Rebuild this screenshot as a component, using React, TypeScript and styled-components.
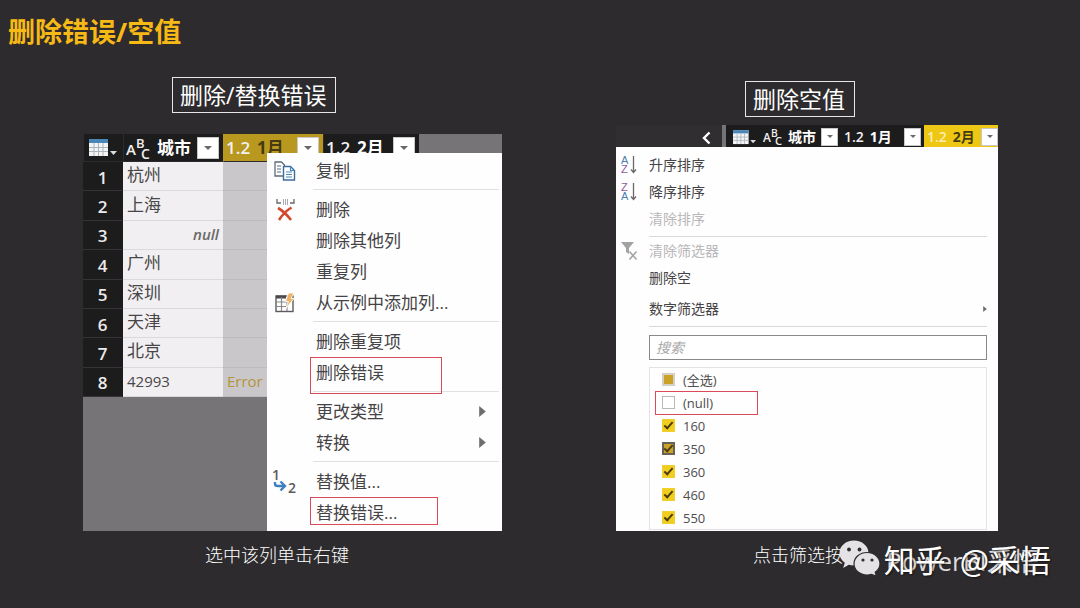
import React from "react";
import styled, { createGlobalStyle, css } from "styled-components";

const sans = `"Open Sans", "Noto Sans CJK SC", sans-serif`;

const GlobalStyle = createGlobalStyle`
  *, *::before, *::after { box-sizing: border-box; }
  body { margin: 0; background: #2d2b2d; font-family: ${sans}; }
  button, input { font-family: inherit; }
`;

const Page = styled.div`
  position: relative;
  min-height: 100vh;
  background: #2d2b2d;
  color: #fff;
  overflow: hidden;
`;

const Title = styled.h1`
  margin: 0;
  padding: 12px 8px 25px;
  font-size: 27px;
  line-height: 40px;
  font-weight: 700;
  color: #f7b916;
`;

const Columns = styled.main`
  display: grid;
  grid-template-columns: 419fr 382fr;
  column-gap: 114px;
  padding: 0 82px 0 83px;
  align-items: start;
`;

const Column = styled.section<{ $top: number }>`
  display: flex;
  flex-direction: column;
  align-items: stretch;
  min-width: 0;
  padding-top: ${(p) => p.$top}px;
`;

const Label = styled.h2<{ $indent: number; $gap: number }>`
  align-self: flex-start;
  margin: 0 0 ${(p) => p.$gap}px ${(p) => p.$indent}px;
  padding: 0 9px 0 7px;
  border: 1px solid #e6e6e6;
  font-size: 23px;
  line-height: 34px;
  font-weight: 400;
  white-space: nowrap;
`;

const Caption = styled.p<{ $indent: number }>`
  margin: 12px 0 0 ${(p) => p.$indent}px;
  font-size: 18px;
  line-height: 24px;
  font-weight: 300;
  white-space: nowrap;
`;

/* ---------- query table ---------- */

const TableShot = styled.div`
  display: grid;
  grid-template-columns: minmax(0, 1fr);
  background: #767476;
  overflow: hidden;
`;

const Table = styled.table`
  grid-area: 1 / 1;
  align-self: start;
  width: 336px;
  height: 263px;
  table-layout: fixed;
  border-collapse: separate;
  border-spacing: 0;
  color: #484648;
`;

const HeadCell = styled.th<{ $active?: boolean }>`
  height: 28px;
  padding: 0 4px 0 2px;
  background: ${(p) => (p.$active ? "#b9981f" : "#1d1c1d")};
  border-left: 1px solid ${(p) => (p.$active ? "#b9981f" : "#2d2b2d")};
  border-bottom: 1px solid #2d2b2d;
`;

const HeadInner = styled.div<{ $small?: boolean; $indent?: boolean }>`
  display: flex;
  align-items: center;
  height: ${(p) => (p.$small ? 21 : 27)}px;
  padding-left: ${(p) => (p.$indent ? 3 : 0)}px;
  line-height: 20px;
  font-size: ${(p) => (p.$small ? 14 : 17)}px;
`;

const TypeTag = styled.span<{ $pale?: boolean; $small?: boolean }>`
  display: flex;
  font-weight: 600;
  color: ${(p) => (p.$pale ? "#fbeeb0" : "#f2f0f2")};
  margin-right: ${(p) => (p.$small ? 6 : 7)}px;
`;

const FieldName = styled.span<{ $dark?: boolean }>`
  flex: 1;
  text-align: left;
  font-weight: 700;
  white-space: nowrap;
  color: ${(p) => (p.$dark ? "#453a12" : "#fff")};
`;

const Drop = styled.button<{ $small?: boolean }>`
  display: flex;
  align-items: center;
  justify-content: center;
  flex: none;
  width: ${(p) => (p.$small ? 17 : 22)}px;
  height: ${(p) => (p.$small ? 18 : 22)}px;
  padding: 0;
  border: 1px solid #c9c7c9;
  background: #fff;
`;

const Num = styled.th`
  padding: 3px 0 0;
  background: #1d1c1d;
  border-bottom: 1px solid #353335;
  border-right: 1px solid #1d1c1d;
  color: #eceaec;
  font-size: 17px;
  line-height: 24px;
  font-weight: 600;
  text-align: center;
`;

const Cell = styled.td<{ $kind?: "text" | "null" | "number" }>`
  padding: 0 4px 2px;
  background: #f1eff1;
  border-bottom: 1px solid #dbd9db;
  font-size: 17px;
  line-height: 24px;
  white-space: nowrap;
  ${(p) => p.$kind === "null" && css`
    font-size: 15px;
    font-style: italic;
    font-weight: 600;
    text-align: right;
    color: #6a686a;
  `}
  ${(p) => p.$kind === "number" && css`
    font-size: 15px;
    font-weight: 500;
  `}
`;

const ErrorCell = styled(Cell)`
  background: #c9c7c9;
  border-bottom-color: #bdbbbd;
  font-size: 15px;
  font-weight: 500;
  color: #b3953a;
`;

/* ---------- context menu ---------- */

const Menu = styled.ul`
  grid-area: 1 / 1;
  position: relative;
  list-style: none;
  margin: 19px 0 0 184px;
  padding: 2px 0 3px;
  background: #fefefe;
`;

const MenuItem = styled.li`
  position: relative;
`;

const MenuButton = styled.button`
  display: grid;
  grid-template-columns: 29px 1fr 7px;
  column-gap: 20px;
  align-items: center;
  width: 100%;
  height: 31px;
  padding: 0 16px 0 0;
  border: 0;
  background: none;
  font-size: 17px;
  line-height: 24px;
  color: #454345;
  text-align: left;
  white-space: nowrap;
`;

const IconSlot = styled.span`
  display: flex;
  justify-content: flex-end;
  align-items: center;
`;

const MenuRule = styled.li`
  height: 1px;
  margin: 3px 3px 4px 46px;
  background: #e2e0e2;
`;

const Mark = styled.span<{ $w: number; $h: number; $x: number }>`
  position: absolute;
  top: 0;
  left: ${(p) => p.$x}px;
  width: ${(p) => p.$w}px;
  height: ${(p) => p.$h}px;
  border: 1px solid #dc4a5a;
  pointer-events: none;
`;

/* ---------- filter panel ---------- */

const FilterShot = styled.div`
  background: #fefefe;
  color: #454345;
`;

const Strip = styled.div`
  display: flex;
  height: 22px;
  background: #1d1c1d;
`;

const StripPane = styled.div`
  display: flex;
  flex: 1;
  align-items: center;
  justify-content: flex-end;
  padding: 3px 11px 0 0;
  background: #302e31;
  border-right: 4px solid #767476;
`;

const StripCell = styled.div<{ $w: number; $active?: boolean }>`
  width: ${(p) => p.$w}px;
  padding: 1px ${(p) => (p.$active ? 0 : 3)}px 0 3px;
  background: ${(p) => (p.$active ? "#edc713" : "#1d1c1d")};
`;

const StripCorner = styled.div`
  display: flex;
  align-items: center;
  width: 34px;
  padding: 2px 0 0 7px;
`;

const FilterBody = styled.div`
  padding: 4px 11px 1px 0;
`;

const FilterItem = styled.button<{ $spaced?: boolean }>`
  display: grid;
  grid-template-columns: 22px 1fr 4px;
  column-gap: 11px;
  align-items: center;
  width: 100%;
  height: 27px;
  margin-top: ${(p) => (p.$spaced ? 4 : 0)}px;
  padding: 0;
  border: 0;
  background: none;
  font-size: 14px;
  line-height: 20px;
  color: #454345;
  text-align: left;
  &:disabled { color: #b9b7b9; }
`;

const FilterRule = styled.hr`
  height: 1px;
  margin: 4px 0 0 33px;
  border: 0;
  background: #d9d7d9;
`;

const Search = styled.input`
  display: block;
  width: calc(100% - 33px);
  height: 25px;
  margin: 8px 0 7px 33px;
  padding: 0 6px;
  border: 1px solid #8a888a;
  border-radius: 0;
  background: #fff;
  font-size: 14px;
  &::placeholder { color: #a9a7a9; font-style: italic; opacity: 1; }
`;

const Options = styled.div`
  margin-left: 33px;
  border: 1px solid #e4e2e4;
`;

const Option = styled.label`
  position: relative;
  display: flex;
  align-items: center;
  height: 23px;
  padding: 0 0 0 12px;
  font-size: 13px;
  line-height: 20px;
  color: #4f4d4f;
`;

const Tick = styled.input<{ $partial?: boolean; $focus?: boolean }>`
  appearance: none;
  display: flex;
  align-items: center;
  justify-content: center;
  width: 13px;
  height: 13px;
  margin: 0 8px 0 0;
  border: 1px solid #b9b7c0;
  background: #fff;
  &:checked {
    border: ${(p) => (p.$focus ? "2px solid #66625a" : "1px solid #efd02e")};
    background: ${(p) => (p.$focus ? "#c9a227" : "#f0cd1f")};
  }
  &:checked::after {
    content: "";
    flex: none;
    width: 5px;
    height: 9px;
    margin-bottom: 2px;
    border: solid #4a3c10;
    border-width: 0 2px 2px 0;
    transform: rotate(42deg);
  }
  ${(p) => p.$partial && css`
    border: 2px solid #d4d0c4;
    background: #c9a227;
  `}
`;

/* ---------- signature ---------- */

const Signature = styled.div`
  position: absolute;
  top: 540px;
  right: 35px;
  display: flex;
  align-items: flex-start;
  width: 206px;
  font-size: 26px;
  line-height: 42px;
  font-weight: 400;
  color: #dddbdd;
  white-space: nowrap;
  svg { flex: none; margin-right: 5px; }
`;

const Watermark = styled.div`
  position: absolute;
  top: 538px;
  right: 29px;
  font-family: "Noto Sans CJK SC", sans-serif;
  font-size: 31px;
  line-height: 42px;
  font-weight: 400;
  color: #fff;
  text-shadow: 1px 1px 2px rgba(0, 0, 0, 0.6);
  white-space: nowrap;
`;

const Handle = styled.span`
  margin-left: 7px;
`;

/* ---------- icons ---------- */

const TableIcon = ({ w, h }: { w: number; h: number }) => (
  <svg width={w} height={h} viewBox="0 0 28 18" aria-hidden="true">
    <rect x="0" y="0" width="19" height="17" fill="#f4f4f4" />
    <rect x="0" y="0" width="19" height="4" fill="#4a86b8" />
    <path d="M0 8.500h19M0 12.500h19M5 4v13M9.500 4v13M14 4v13" stroke="#a9b4bd" strokeWidth="1" />
    <path d="M21 12h7l-3.500 4z" fill="#dddbdd" />
  </svg>
);

const AbcIcon = ({ w, h }: { w: number; h: number }) => (
  <svg width={w} height={h} viewBox="0 0 24 24" overflow="visible" aria-hidden="true" fontFamily="Open Sans" fontWeight="600" fill="#f0eef0">
    <text x="0" y="19" fontSize="15">A</text>
    <text x="10" y="12" fontSize="13">B</text>
    <text x="15" y="23" fontSize="14">C</text>
  </svg>
);

const Caret = ({ w = 8 }: { w?: number }) => (
  <svg width={w} height={w / 2} viewBox="0 0 8 4" aria-hidden="true">
    <path d="M0 0h8L4 4z" fill="#6a686a" />
  </svg>
);

const CopyIcon = () => (
  <svg width="22" height="20" viewBox="0 0 22 20" fill="#fff" aria-hidden="true">
    <path d="M1 1h6.500l3 3v11H1z" stroke="#5f6b78" strokeWidth="1.300" />
    <path d="M3 5h4M3 8h4M3 11h4" stroke="#5f6b78" strokeWidth="1.200" />
    <path d="M9.500 5.500h7l4 4v9.500h-11z" stroke="#3d6d9c" strokeWidth="1.400" />
    <path d="M16.500 5.500v4h4M12 11h6M12 13.500h6M12 16h6" stroke="#4a8ac0" strokeWidth="1.200" fill="none" />
  </svg>
);

const DeleteIcon = () => (
  <svg width="20" height="22" viewBox="0 0 20 22" fill="none" aria-hidden="true">
    <path d="M1 0v4h4M18 0v4h-4" stroke="#6a686a" strokeWidth="1.300" />
    <path d="M7.500 0v6M9.500 0v6M11.500 0v6" stroke="#a9a7b4" strokeWidth="1" />
    <path d="M2 9q7 4 13 12M15.500 8.500Q8 13 3 21" stroke="#d4492e" strokeWidth="2.600" />
  </svg>
);

const ExampleIcon = () => (
  <svg width="21" height="20" viewBox="0 0 21 20" fill="none" aria-hidden="true">
    <rect x="1" y="3" width="17" height="15.500" fill="#fff" stroke="#5c5a5c" strokeWidth="1.400" />
    <path d="M1 4h10" stroke="#4a484a" strokeWidth="3" />
    <path d="M6.500 4v14M12 9v9M1 9h10M1 13.500h10" stroke="#8a888a" strokeWidth="1.200" />
    <path d="M13.500 0h5.500l-3 5.500h3L10.500 16l3-7.500h-3z" fill="#efb265" stroke="#fff" strokeWidth="0.800" />
  </svg>
);

const ReplaceIcon = () => (
  <svg width="23" height="26" viewBox="0 0 23 26" overflow="visible" aria-hidden="true" fontFamily="Open Sans" fontWeight="600" fill="#5c5a5c">
    <text x="-1" y="11" fontSize="14">1</text>
    <text x="15" y="24" fontSize="14">2</text>
    <path d="M2 13v2q0 2 3 2h6M7.500 12.500L12 17l-4.500 4.500" fill="none" stroke="#3f7fbd" strokeWidth="2.400" />
  </svg>
);

const SubArrow = ({ w, h }: { w: number; h: number }) => (
  <svg width={w} height={h} viewBox="0 0 6 10" aria-hidden="true">
    <path d="M0 0l6 5-6 5z" fill="#6f6d6f" />
  </svg>
);

const SortIcon = ({ first, second }: { first: string; second: string }) => {
  const tone: Record<string, string> = { A: "#4a7fb0", Z: "#8d5a9c" };
  return (
    <svg width="17" height="22" viewBox="0 0 17 22" overflow="visible" aria-hidden="true" fontFamily="Liberation Sans" fontSize="11">
      <text x="0" y="10" fill={tone[first]}>{first}</text>
      <text x="0" y="19" fill={tone[second]}>{second}</text>
      <path d="M12.500 2v16M10 15.500l2.500 3 2.500-3" fill="none" stroke="#6a686a" strokeWidth="1.300" />
    </svg>
  );
};

const ClearFilterIcon = () => (
  <svg width="17" height="18" viewBox="0 0 17 18" aria-hidden="true">
    <path d="M0 0h13L8 6v6l-3-2V6z" fill="#a3a1a3" />
    <path d="M8.500 9.500l7 8M15.500 9.500l-7 8" stroke="#a3a1a3" strokeWidth="1.500" />
  </svg>
);

const WeChatIcon = () => (
  <svg width="42" height="36" viewBox="0 0 42 36" aria-hidden="true">
    <path d="M15 0.500C6.800 0.500 0.500 6 0.500 13c0 4 2 7.400 5.300 9.700L4.200 28l5.600-3.200c1.700.5 3.400.7 5.200.7 8 0 14.500-5.500 14.500-12.500S23 0.500 15 0.500z" fill="#e4e2e4" />
    <path d="M28 12.500c-7.200 0-13 5-13 11.300S20.800 35 28 35c1.500 0 3-.2 4.300-.6L37.500 36l-1.300-3.800c3-2 4.800-5 4.800-8.400 0-6.300-5.800-11.300-13-11.300z" fill="#e4e2e4" stroke="#2d2b2d" strokeWidth="1.200" />
    <circle cx="10" cy="9.500" r="1.900" fill="#2d2b2d" />
    <circle cx="20.500" cy="9.500" r="1.900" fill="#2d2b2d" />
    <circle cx="24" cy="20" r="1.600" fill="#2d2b2d" />
    <circle cx="33" cy="20" r="1.600" fill="#2d2b2d" />
  </svg>
);

/* ---------- data ---------- */

const cities = ["杭州", "上海", null, "广州", "深圳", "天津", "北京", "42993"];

type Entry = { text: string; icon?: React.ReactNode; sub?: boolean; mark?: [number, number] };

const menuGroups: Entry[][] = [
  [{ text: "复制", icon: <CopyIcon /> }],
  [
    { text: "删除", icon: <DeleteIcon /> },
    { text: "删除其他列" },
    { text: "重复列" },
    { text: "从示例中添加列...", icon: <ExampleIcon /> },
  ],
  [{ text: "删除重复项" }, { text: "删除错误", mark: [132, 37] }],
  [{ text: "更改类型", sub: true }, { text: "转换", sub: true }],
  [
    { text: "替换值...", icon: <ReplaceIcon /> },
    { text: "替换错误...", mark: [128, 28] },
  ],
];

const options = [
  { text: "(全选)", partial: true },
  { text: "(null)", marked: true },
  { text: "160", on: true },
  { text: "350", on: true, focus: true },
  { text: "360", on: true },
  { text: "460", on: true },
  { text: "550", on: true },
];

export default function App() {
  return (
    <Page>
      <GlobalStyle />
      <Title>删除错误/空值</Title>
      <Columns>
        <Column $top={0}>
          <Label $indent={89} $gap={21}>删除/替换错误</Label>
          <TableShot>
            <Table>
              <colgroup>
                <col width="40" />
                <col width="100" />
                <col width="100" />
                <col width="96" />
              </colgroup>
              <thead>
                <tr>
                  <HeadCell>
                    <HeadInner $indent><TableIcon w={28} h={18} /></HeadInner>
                  </HeadCell>
                  <HeadCell>
                    <HeadInner>
                      <TypeTag><AbcIcon w={24} h={24} /></TypeTag>
                      <FieldName>城市</FieldName>
                      <Drop aria-label="筛选城市"><Caret /></Drop>
                    </HeadInner>
                  </HeadCell>
                  <HeadCell $active>
                    <HeadInner>
                      <TypeTag>1.2</TypeTag>
                      <FieldName $dark>1月</FieldName>
                      <Drop aria-label="筛选1月"><Caret /></Drop>
                    </HeadInner>
                  </HeadCell>
                  <HeadCell>
                    <HeadInner>
                      <TypeTag>1.2</TypeTag>
                      <FieldName>2月</FieldName>
                      <Drop aria-label="筛选2月"><Caret /></Drop>
                    </HeadInner>
                  </HeadCell>
                </tr>
              </thead>
              <tbody>
                {cities.map((city, i) => (
                  <tr key={i}>
                    <Num scope="row">{i + 1}</Num>
                    <Cell $kind={city === null ? "null" : i === 7 ? "number" : "text"}>{city ?? "null"}</Cell>
                    <ErrorCell>{i === 7 ? "Error" : ""}</ErrorCell>
                  </tr>
                ))}
              </tbody>
            </Table>
            <Menu>
              {menuGroups.map((group, g) => (
                <React.Fragment key={g}>
                  {g > 0 && <MenuRule role="separator" />}
                  {group.map((item) => (
                    <MenuItem key={item.text}>
                      <MenuButton>
                        <IconSlot>{item.icon}</IconSlot>
                        <span>{item.text}</span>
                        {item.sub && <SubArrow w={7} h={11} />}
                      </MenuButton>
                      {item.mark && <Mark $x={43} $w={item.mark[0]} $h={item.mark[1]} />}
                    </MenuItem>
                  ))}
                </React.Fragment>
              ))}
            </Menu>
          </TableShot>
          <Caption $indent={122}>选中该列单击右键</Caption>
        </Column>

        <Column $top={4}>
          <Label $indent={129} $gap={8}>删除空值</Label>
          <FilterShot>
            <Strip>
              <StripPane>
                <svg width="9" height="14" viewBox="0 0 9 14" aria-hidden="true">
                  <path d="M7.500 1.500L2 7l5.500 5.500" fill="none" stroke="#fff" strokeWidth="2.400" />
                </svg>
              </StripPane>
              <StripCorner><TableIcon w={23} h={15} /></StripCorner>
              <StripCell $w={81}>
                <HeadInner $small>
                  <TypeTag $small><AbcIcon w={19} h={19} /></TypeTag>
                  <FieldName>城市</FieldName>
                  <Drop $small aria-label="筛选城市"><Caret w={6} /></Drop>
                </HeadInner>
              </StripCell>
              <StripCell $w={83}>
                <HeadInner $small>
                  <TypeTag $small>1.2</TypeTag>
                  <FieldName>1月</FieldName>
                  <Drop $small aria-label="筛选1月"><Caret w={6} /></Drop>
                </HeadInner>
              </StripCell>
              <StripCell $w={74} $active>
                <HeadInner $small>
                  <TypeTag $small $pale>1.2</TypeTag>
                  <FieldName $dark>2月</FieldName>
                  <Drop $small aria-label="筛选2月"><Caret w={6} /></Drop>
                </HeadInner>
              </StripCell>
            </Strip>
            <FilterBody>
              <FilterItem>
                <IconSlot><SortIcon first="A" second="Z" /></IconSlot>
                <span>升序排序</span>
              </FilterItem>
              <FilterItem>
                <IconSlot><SortIcon first="Z" second="A" /></IconSlot>
                <span>降序排序</span>
              </FilterItem>
              <FilterItem disabled>
                <IconSlot />
                <span>清除排序</span>
              </FilterItem>
              <FilterRule />
              <FilterItem disabled>
                <IconSlot><ClearFilterIcon /></IconSlot>
                <span>清除筛选器</span>
              </FilterItem>
              <FilterItem>
                <IconSlot />
                <span>删除空</span>
              </FilterItem>
              <FilterItem $spaced>
                <IconSlot />
                <span>数字筛选器</span>
                <SubArrow w={4} h={6} />
              </FilterItem>
              <FilterRule />
              <Search type="search" placeholder="搜索" aria-label="搜索" />
              <Options>
                {options.map((o) => (
                  <Option key={o.text}>
                    <Tick type="checkbox" defaultChecked={o.on} $partial={o.partial} $focus={o.focus} />
                    {o.text}
                    {o.marked && <Mark $x={5} $w={103} $h={24} />}
                  </Option>
                ))}
              </Options>
            </FilterBody>
          </FilterShot>
          <Caption $indent={137}>点击筛选按钮</Caption>
        </Column>
      </Columns>
      <Signature>
        <WeChatIcon />
        <span>PowerBI采悟</span>
      </Signature>
      <Watermark>知乎 <Handle>@采悟</Handle></Watermark>
    </Page>
  );
}
